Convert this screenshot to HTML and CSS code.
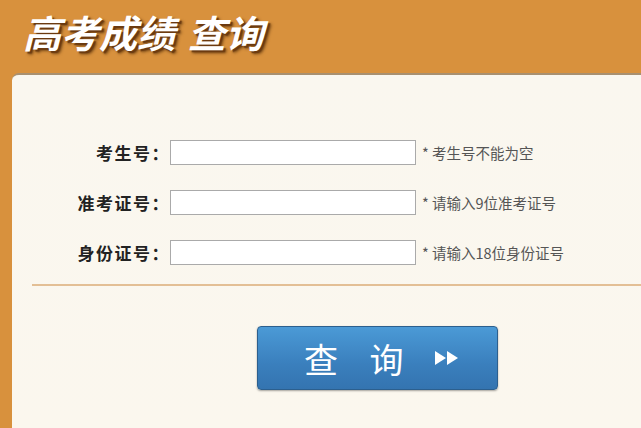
FILE: index.html
```html
<!DOCTYPE html>
<html lang="zh-CN">
<head>
    <meta charset="UTF-8">
    <title>高考成绩查询</title>
    <link rel="stylesheet" href="styles.css">
</head>
<body>
    <header class="top">
        <h1 class="title">高考成绩 查询</h1>
    </header>
    <main class="panel">
        <form class="query-form">
            <div class="row">
                <label>考生号：</label>
                <input type="text">
                <span class="hint">* 考生号不能为空</span>
            </div>
            <div class="row">
                <label>准考证号：</label>
                <input type="text">
                <span class="hint">* 请输入9位准考证号</span>
            </div>
            <div class="row">
                <label>身份证号：</label>
                <input type="text">
                <span class="hint">* 请输入18位身份证号</span>
            </div>
        </form>
        <div class="divider"></div>
        <div class="actions">
            <button class="query-btn" type="button">
                <span class="btn-text">查 询</span>
                <span class="arrows">
                    <svg width="26" height="16" viewBox="0 0 26 16">
                        <polygon points="1,1 12,8 1,15" fill="#fff"/>
                        <polygon points="13,1 24,8 13,15" fill="#fff"/>
                    </svg>
                </span>
            </button>
        </div>
    </main>
</body>
</html>
```

FILE: styles.css
```css
/* Ogólne */
html, body {
    height: 100%;
}

body {
    margin: 0;
    background-color: #d8913d;
    font-family: "Noto Sans CJK SC", "Liberation Sans", sans-serif;
    overflow: hidden;
}

/* Nagłówek */
.top {
    height: 73px;
    display: flex;
    align-items: center;
    padding-left: 23px;
}

.title {
    margin: 0;
    margin-top: -10px;
    font-size: 38px;
    font-weight: bold;
    font-style: italic;
    color: #fff;
    word-spacing: 4px;
    text-shadow: 2px 2px 1px #6b3a10, 3px 3px 3px rgba(60, 30, 0, 0.6);
}

/* Panel */
.panel {
    margin-left: 12px;
    height: calc(100% - 73px);
    box-sizing: border-box;
    background: linear-gradient(#faf7ef, #fbf7ee);
    border-top: 2px solid #a89070;
    border-top-left-radius: 7px;
    padding-top: 65px;
}

.query-form {
    display: flex;
    flex-direction: column;
    gap: 25px;
}

.row {
    display: flex;
    align-items: center;
    height: 25px;
}

.row label {
    width: 158px;
    text-align: right;
    font-size: 17px;
    font-weight: bold;
    letter-spacing: 1.5px;
    color: #222;
}

.row input {
    width: 246px;
    height: 25px;
    box-sizing: border-box;
    border: 1px solid #aaa;
    background-color: #fff;
    margin: 0 6px 0 0;
    padding: 0 4px;
}

.hint {
    font-size: 14.5px;
    color: #555;
}

.divider {
    height: 2px;
    background-color: #e3bf95;
    margin: 19px 0 0 20px;
}

/* Przycisk */
.actions {
    padding: 40px 0 0 245px;
}

.query-btn {
    width: 241px;
    height: 64px;
    border: 1px solid #2c5f8e;
    border-radius: 4px;
    background: linear-gradient(#4b9ad6, #3a7fbd 60%, #3474b0);
    box-shadow: 0 1px 2px rgba(0, 0, 0, 0.35);
    display: flex;
    align-items: center;
    padding: 0 0 0 46px;
    cursor: pointer;
}

.btn-text {
    font-family: "Noto Sans CJK SC", sans-serif;
    font-size: 34px;
    color: #fff;
    word-spacing: 24px;
}

.arrows {
    margin-left: 30px;
    display: flex;
}
```
